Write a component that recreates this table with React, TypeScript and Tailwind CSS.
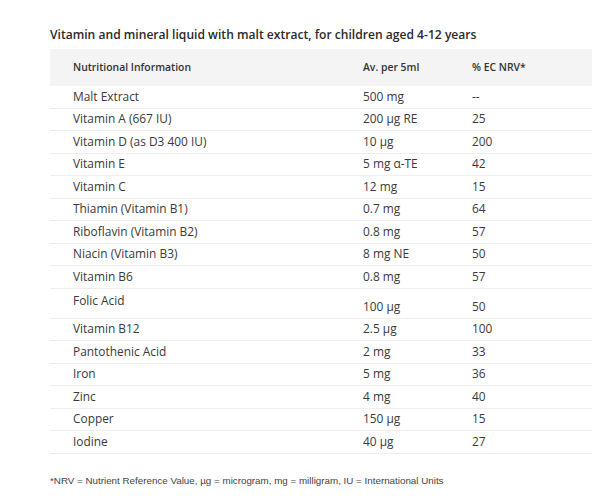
import React from 'react';

const rows = [
  { name: 'Malt Extract', amount: '500 mg', nrv: '--' },
  { name: 'Vitamin A (667 IU)', amount: '200 µg RE', nrv: '25' },
  { name: 'Vitamin D (as D3 400 IU)', amount: '10 µg', nrv: '200' },
  { name: 'Vitamin E', amount: '5 mg α-TE', nrv: '42' },
  { name: 'Vitamin C', amount: '12 mg', nrv: '15' },
  { name: 'Thiamin (Vitamin B1)', amount: '0.7 mg', nrv: '64' },
  { name: 'Riboflavin (Vitamin B2)', amount: '0.8 mg', nrv: '57' },
  { name: 'Niacin (Vitamin B3)', amount: '8 mg NE', nrv: '50' },
  { name: 'Vitamin B6', amount: '0.8 mg', nrv: '57' },
  { name: 'Folic Acid', amount: '100 µg', nrv: '50', tall: true },
  { name: 'Vitamin B12', amount: '2.5 µg', nrv: '100' },
  { name: 'Pantothenic Acid', amount: '2 mg', nrv: '33' },
  { name: 'Iron', amount: '5 mg', nrv: '36' },
  { name: 'Zinc', amount: '4 mg', nrv: '40' },
  { name: 'Copper', amount: '150 µg', nrv: '15' },
  { name: 'Iodine', amount: '40 µg', nrv: '27' },
];

const App = () => {
  return (
    <div className="w-[600px] h-[498px] bg-white text-[#333] font-['Open_Sans',sans-serif]">
      <div className="pl-[50px] pr-[8px] pt-[27px]">
        <h2 className="text-[12.1px] font-semibold leading-[16px] text-[#2b2b2b]">
          Vitamin and mineral liquid with malt extract, for children aged 4-12 years
        </h2>

        <div className="mt-[6px] w-[542px] text-[11.9px]">
          <div className="flex h-[37px] items-center bg-[#f4f4f4] text-[10.4px] font-semibold text-[#333]">
            <div className="w-[313px] pl-[23px]">Nutritional Information</div>
            <div className="w-[109px]">Av. per 5ml</div>
            <div>% EC NRV*</div>
          </div>

          {rows.map((row) => (
            <div
              key={row.name}
              className={
                row.tall
                  ? 'flex h-[30px] border-b border-[#eeeeee] text-[#3a3a3a]'
                  : 'flex h-[22.5px] items-center border-b border-[#eeeeee] text-[#3a3a3a]'
              }
            >
              <div className={row.tall ? 'w-[313px] pl-[23px] pt-[3px]' : 'w-[313px] pl-[23px]'}>
                {row.name}
              </div>
              <div className={row.tall ? 'w-[109px] pt-[9px]' : 'w-[109px]'}>{row.amount}</div>
              <div className={row.tall ? 'pt-[9px]' : ''}>{row.nrv}</div>
            </div>
          ))}
        </div>

        <p className="mt-[20px] text-[9.8px] text-[#444] font-['Liberation_Sans',sans-serif]">
          *NRV = Nutrient Reference Value, µg = microgram, mg = milligram, IU = International Units
        </p>
      </div>
    </div>
  );
};

export default App;
